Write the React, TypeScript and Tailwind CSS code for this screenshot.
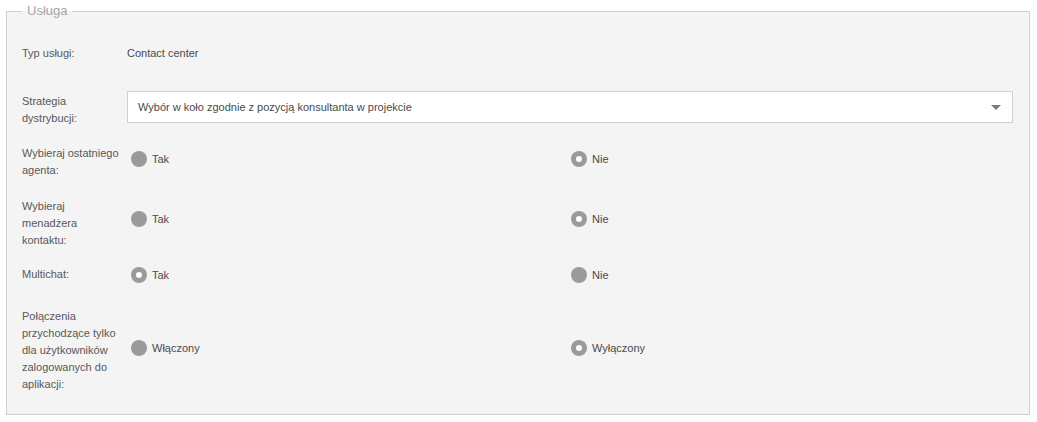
import React from "react";

function Radio({ checked, label }: { checked: boolean; label: string }) {
  return (
    <div className="flex items-center h-[16px] w-[440px]">
      <span className="flex items-center justify-center w-[16px] h-[16px] rounded-full bg-[#9a9a9a] shrink-0">
        {checked && <span className="block w-[6px] h-[6px] rounded-full bg-white" />}
      </span>
      <span className="ml-[5px] leading-[16px] text-[#4a4a4a]">{label}</span>
    </div>
  );
}

function RadioRow({
  label,
  left,
  right,
  checkedLeft,
  mt,
  radioMt,
}: {
  label: React.ReactNode;
  left: string;
  right: string;
  checkedLeft: boolean;
  mt: string;
  radioMt: string;
}) {
  return (
    <div className={`flex items-start ${mt}`}>
      <div className="w-[105px] shrink-0 leading-[17px] text-[#585858]">{label}</div>
      <div className={`flex pl-[4px] ${radioMt}`}>
        <Radio checked={checkedLeft} label={left} />
        <Radio checked={!checkedLeft} label={right} />
      </div>
    </div>
  );
}

export default function App() {
  return (
    <div className="w-[1037px] h-[422px] bg-white font-['Liberation_Sans',Arial,sans-serif] text-[11px]">
      <fieldset className="ml-[6px] mt-[1px] w-[1024px] border border-[#cfcfcf] bg-[#f4f4f4] px-[15px]">
        <legend className="px-[5px] text-[13px] leading-[20px] text-[#a6a6a6]">Usługa</legend>
        <div className="pt-[24px] pb-[21px]">
          <div className="flex h-[17px] leading-[17px]">
            <div className="w-[105px] shrink-0 text-[#585858]">Typ usługi:</div>
            <div className="text-[#4a4a4a]">Contact center</div>
          </div>

          <div className="flex items-start mt-[29px]">
            <div className="w-[105px] shrink-0 leading-[17px] pt-[2px] text-[#585858]">
              Strategia
              <br />
              dystrybucji:
            </div>
            <div className="flex items-center justify-between w-[886px] h-[32px] bg-white border border-[#cfcfcf] pl-[10px] pr-[11px]">
              <span className="text-[#4a4a4a]">Wybór w koło zgodnie z pozycją konsultanta w projekcie</span>
              <span className="block w-0 h-0 border-x-[5px] border-t-[5px] border-x-transparent border-t-[#7a7a7a]" />
            </div>
          </div>

          <RadioRow
            mt="mt-[18px]"
            radioMt="mt-[6px]"
            label={
              <>
                Wybieraj ostatniego
                <br />
                agenta:
              </>
            }
            left="Tak"
            right="Nie"
            checkedLeft={false}
          />
          <RadioRow
            mt="mt-[19px]"
            radioMt="mt-[13px]"
            label={
              <>
                Wybieraj
                <br />
                menadżera
                <br />
                kontaktu:
              </>
            }
            left="Tak"
            right="Nie"
            checkedLeft={false}
          />
          <RadioRow
            mt="mt-[17px]"
            radioMt="mt-[1px]"
            label={<>Multichat:</>}
            left="Tak"
            right="Nie"
            checkedLeft={true}
          />
          <RadioRow
            mt="mt-[25px]"
            radioMt="mt-[32px]"
            label={
              <>
                Połączenia
                <br />
                przychodzące tylko
                <br />
                dla użytkowników
                <br />
                zalogowanych do
                <br />
                aplikacji:
              </>
            }
            left="Włączony"
            right="Wyłączony"
            checkedLeft={false}
          />
        </div>
      </fieldset>
    </div>
  );
}
